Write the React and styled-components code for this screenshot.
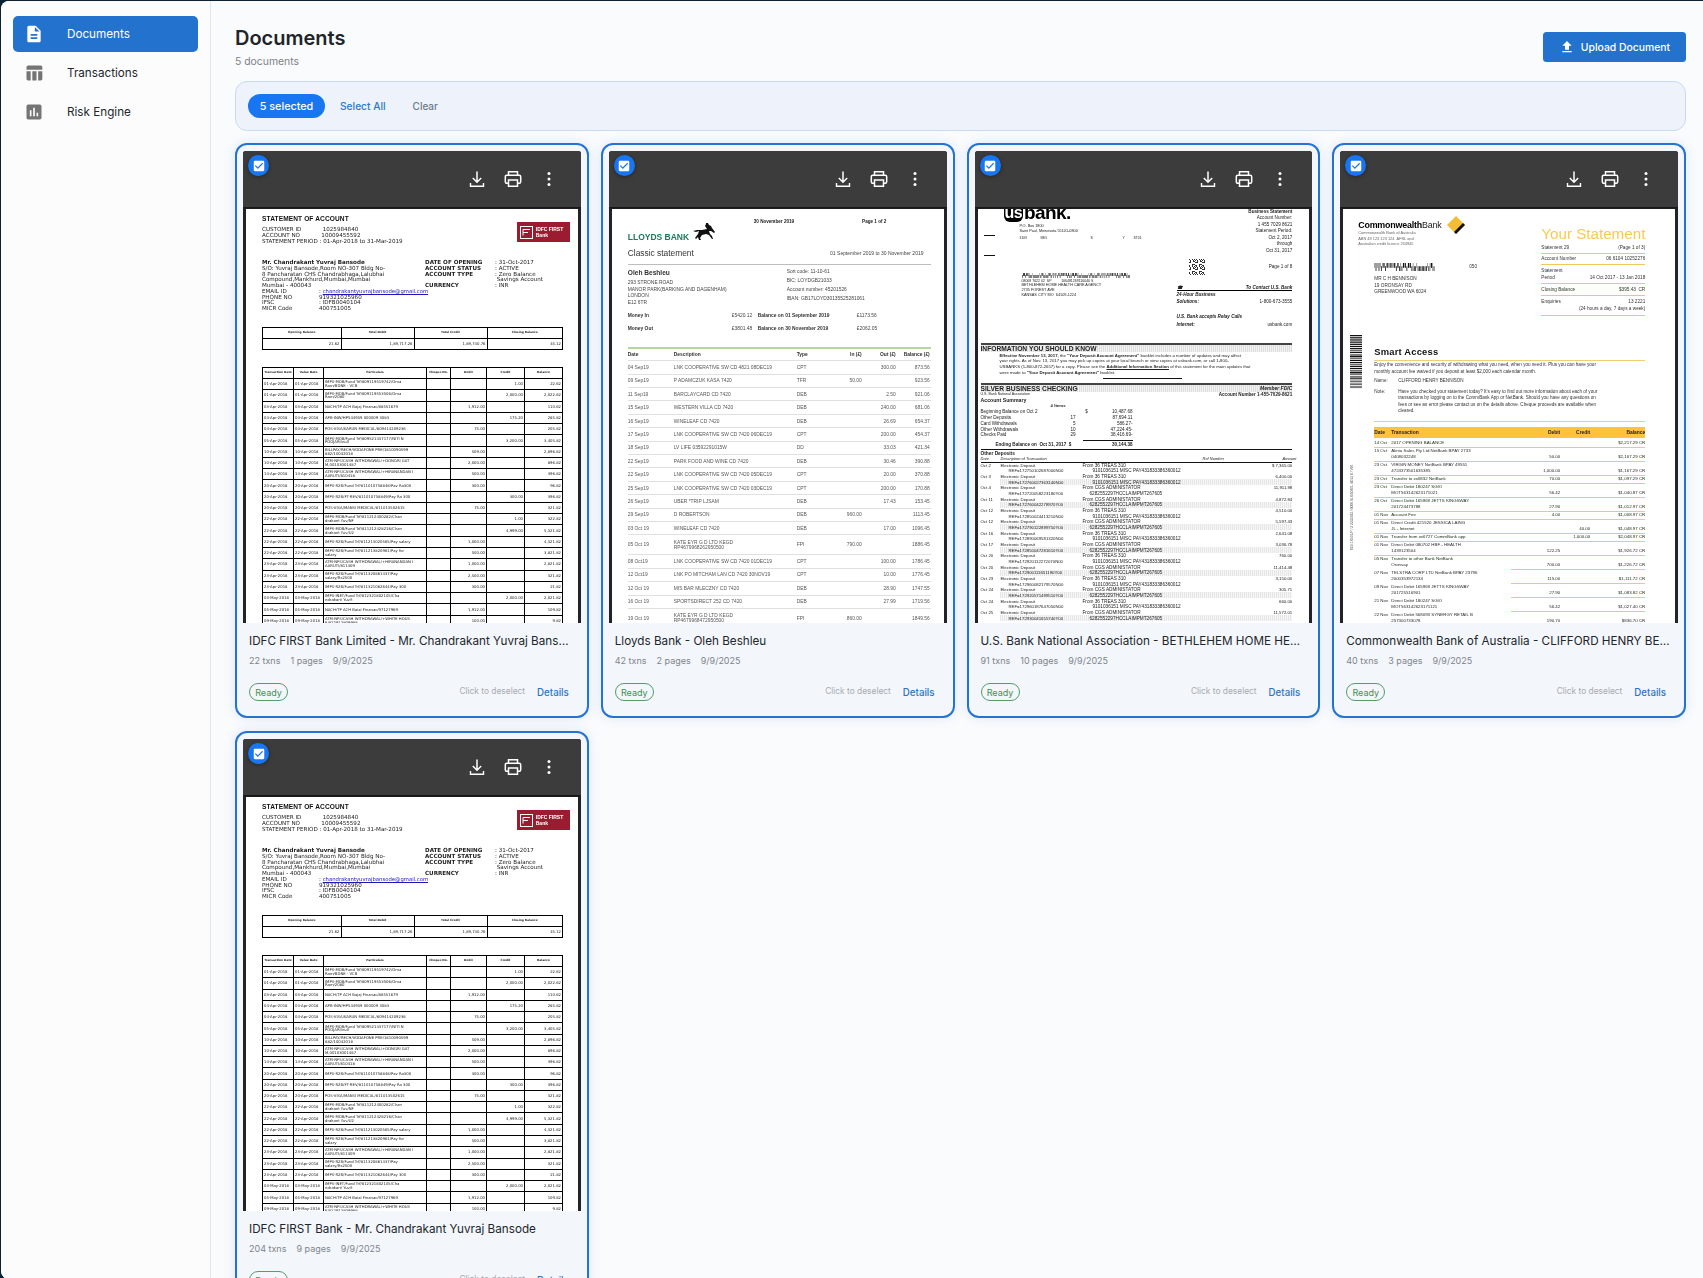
import React from "react";
import styled, { createGlobalStyle } from "styled-components";

const GlobalStyle = createGlobalStyle`
  html, body { margin: 0; padding: 0; height: 100%; background: #0c2233; }
  #root { height: 100%; }
  * { box-sizing: border-box; }
`;

const Shell = styled.div`
  display: flex;
  height: 100vh;
  overflow: hidden;
  margin-top: 1px;
  margin-left: 1px;
  border-radius: 8px 0 0 8px;
  font-family: Inter, "Liberation Sans", sans-serif;
  background: #fafbfd;
`;

const Sidebar = styled.nav`
  width: 210px;
  flex: none;
  padding: 15px 12px 0 12px;
  background: #fcfcfd;
  border-right: 1px solid #e2e5e9;
  display: flex;
  flex-direction: column;
  gap: 3px;
`;

const NavItem = styled.div`
  height: 36px;
  border-radius: 5px;
  display: flex;
  align-items: center;
  padding-left: 11px;
  gap: 23px;
  font-size: 11.7px;
  color: ${(p) => (p.$active ? "#ffffff" : "#23272c")};
  background: ${(p) => (p.$active ? "#2373ce" : "transparent")};
  svg { width: 20px; height: 20px; fill: ${(p) => (p.$active ? "#ffffff" : "#757575")}; }
`;

const NavLabel = styled.span`
  margin-top: -1px;
`;

const Main = styled.main`
  flex: 1;
  min-width: 0;
  padding: 23px 17px 0 24px;
`;

const Header = styled.header`
  display: flex;
  justify-content: space-between;
  align-items: flex-start;
  margin-bottom: 10px;
`;

const PageTitle = styled.h1`
  margin: 0;
  font-size: 20px;
  line-height: 28px;
  font-weight: 600;
  color: #212529;
`;

const PageCount = styled.div`
  margin-top: 1px;
  font-size: 10.4px;
  line-height: 18px;
  color: #7c8188;
`;

const UploadButton = styled.button`
  margin-top: 8px;
  width: 143px;
  height: 30px;
  border: 0;
  border-radius: 3.5px;
  background: #2373ce;
  color: #ffffff;
  font: 500 10.4px Inter, sans-serif;
  display: flex;
  align-items: center;
  justify-content: center;
  gap: 6px;
  svg { width: 16px; height: 16px; fill: #ffffff; }
`;

const SelectionBar = styled.div`
  height: 50px;
  margin-bottom: 12px;
  padding-left: 12px;
  display: flex;
  align-items: center;
  gap: 15px;
  background: #edf2fb;
  border: 1px solid #c8daf2;
  border-radius: 12px;
`;

const SelectedChip = styled.span`
  width: 77px;
  height: 24px;
  border-radius: 12px;
  background: #1976f2;
  color: #ffffff;
  font-size: 10.8px;
  font-weight: 500;
  display: flex;
  align-items: center;
  justify-content: center;
`;

const BarLink = styled.span`
  font-size: ${(p) => (p.$muted ? 10 : 10.2)}px;
  font-weight: 500;
  margin-right: 12px;
  color: ${(p) => (p.$muted ? "#6d7a88" : "#2a78d6")};
`;

const CardGrid = styled.div`
  display: grid;
  grid-template-columns: repeat(4, minmax(0, 1fr));
  column-gap: 12px;
  row-gap: 13px;
`;

const Card = styled.article`
  position: relative;
  min-width: 0;
  padding: 6px 6px 0;
  height: 575px;
  border: 2px solid #2472d2;
  border-radius: 12px;
  background: #f3f6fb;
  box-shadow: 0 0 12px rgba(36, 114, 210, 0.14);
`;

const CheckBadge = styled.div`
  position: absolute;
  top: 10px;
  left: 11px;
  width: 21px;
  height: 21px;
  border-radius: 50%;
  background: #1976f2;
  box-shadow: 0 1px 4px rgba(0, 0, 0, 0.35);
  display: flex;
  align-items: center;
  justify-content: center;
  svg { width: 14px; height: 14px; fill: #ffffff; }
`;

const Viewer = styled.div`
  height: 472px;
  display: flex;
  flex-direction: column;
  border-radius: 3px 3px 0 0;
  overflow: hidden;
  background: #222326;
`;

const ViewerBar = styled.div`
  flex: none;
  height: 56px;
  background: #3c3c3c;
  display: flex;
  align-items: center;
  justify-content: flex-end;
  padding-right: 14px;
  box-shadow: 0 1px 2px rgba(0, 0, 0, 0.5);
`;

const ViewerButton = styled.span`
  width: 36px;
  display: flex;
  justify-content: center;
  svg { width: 20px; height: 20px; fill: none; stroke: #ffffff; stroke-width: 1.5; }
`;

const PageWell = styled.div`
  flex: 1;
  min-height: 0;
  padding: 2px 3px 0;
  overflow: hidden;
`;

const CardBody = styled.div`
  padding: 9px 11px 0 6px;
`;

const CardTitle = styled.div`
  margin-right: -3px;
  font-size: 11.7px;
  line-height: 18px;
  color: #22262b;
  white-space: nowrap;
  overflow: hidden;
  text-overflow: ellipsis;
`;

const MetaRow = styled.div`
  margin-top: 3px;
  display: flex;
  gap: 10px;
  font-size: 9px;
  line-height: 16px;
  color: #80858c;
`;

const CardFooter = styled.div`
  margin: 14px 1px 0 0;
  display: flex;
  align-items: center;
  gap: 12px;
`;

const ReadyChip = styled.span`
  width: 39px;
  height: 18px;
  border: 1px solid #559d69;
  border-radius: 9px;
  color: #43914f;
  font-size: 9px;
  display: flex;
  align-items: center;
  justify-content: center;
  margin-right: auto;
`;

const DeselectHint = styled.span`
  font-size: 8.4px;
  color: #a7abb0;
  margin-top: -2px;
`;

const DetailsLink = styled.span`
  font-size: 9.7px;
  font-weight: 500;
  color: #2c74c6;
  margin-top: 1px;
`;

/* statement pages */

const Sheet = styled.div`
  height: 500px;
  background: #ffffff;
  color: #222;
  font-family: "Liberation Sans", Arial, sans-serif;
  overflow: hidden;
  filter: blur(0.28px);
  white-space: nowrap;
`;

const IdfcSheet = styled(Sheet)`
  padding: 5px 0 0 16px;
  font-family: "DejaVu Sans", sans-serif;
`;

const IdfcTop = styled.div`
  display: flex;
  justify-content: space-between;
  padding-right: 8px;
`;

const IdfcHeading = styled.div`
  font: bold 6.6px/9px "Liberation Sans", sans-serif;
  color: #111;
  letter-spacing: 0.1px;
`;

const IdfcLines = styled.div`
  margin-top: ${(p) => p.$top || 0}px;
  font-size: 5.6px;
  line-height: ${(p) => p.$lh || 6}px;
  ${(p) => p.$bold && "font-weight: bold;"}
`;

const IdfcLogo = styled.div`
  margin-top: 8px;
  width: 53px;
  height: 20px;
  background: #9b1b30;
  color: #ffffff;
  display: flex;
  align-items: center;
  gap: 3px;
  padding-left: 3px;
  font: bold 5px/6px "Liberation Sans", sans-serif;
  svg { width: 13px; height: 13px; }
`;

const IdfcCustomer = styled.div`
  margin-top: 16px;
  display: flex;
`;

const IdfcLeft = styled.div`
  width: 163px;
`;

const IdfcMiddle = styled.div`
  width: 70px;
`;

const EmailRow = styled.div`
  display: flex;
  span:first-child { width: 57px; flex: none; }
`;

const MailLink = styled.span`
  color: #1a1ab8;
  text-decoration: underline;
  font-size: 5.3px;
`;

const IdfcTable = styled.table`
  width: 301px;
  margin-top: ${(p) => p.$top}px;
  border-collapse: collapse;
  table-layout: fixed;
  font-size: 3.8px;
  line-height: 3.9px;
  td, th {
    border: 1px solid #000;
    padding: 0 1px;
    overflow: hidden;
    white-space: normal;
    color: #222;
    height: ${(p) => p.$row}px;
  }
  th { text-align: center; font-weight: bold; white-space: nowrap; font-size: 2.9px; padding: 0; }
  td.num { text-align: right; }
`;

const CellClip = styled.div`
  max-height: 8px;
  overflow: hidden;
  padding-right: 10px;
`;

const LloydsSheet = styled(Sheet)`
  padding: 6px 13px 0 16px;
  color: #444;
  font-size: 4.9px;
`;

const LloydsTop = styled.div`
  display: flex;
  height: 12px;
  align-items: center;
  font-weight: bold;
  font-size: 4.6px;
  color: #222;
  span:first-child { margin-left: 126px; }
  span:last-child { margin-left: 68px; }
`;

const LloydsBrand = styled.div`
  margin-top: -3px;
  height: 19px;
  display: flex;
  align-items: flex-end;
  gap: 3px;
  color: #1c7a5b;
  font-size: 8.5px;
  font-weight: bold;
  line-height: 12px;
  svg { width: 24px; height: 20px; }
`;

const ClassicRow = styled.div`
  margin-top: 4px;
  height: 12px;
  display: flex;
  justify-content: space-between;
  align-items: center;
  padding-right: 7px;
  font-size: 5px;
  b { font-weight: normal; font-size: 8.4px; color: #333; }
`;

const LloydsRule = styled.div`
  margin-top: ${(p) => p.$top}px;
  height: ${(p) => p.$h || 1}px;
  background: ${(p) => p.$color || "#bdbdbd"};
`;

const AddressGrid = styled.div`
  display: grid;
  grid-template-columns: 159px 1fr;
  margin-top: 2px;
`;

const HolderName = styled.div`
  font-size: 6.6px;
  font-weight: bold;
  line-height: 9px;
  margin: 1px 0 3px;
  color: #333;
`;

const AddressLine = styled.div`
  line-height: ${(p) => p.$lh}px;
`;

const MoneyRow = styled.div`
  display: grid;
  grid-template-columns: 104px 26px 99px 1fr;
  height: 12.5px;
  align-items: center;
  ${(p) => p.$first && "margin-top: 2.5px;"}
  b { color: #333; }
`;

const LloydsTxRow = styled.div`
  display: grid;
  grid-template-columns: 46px 123px 33px 32px 34px 34px;
  height: ${(p) => p.$h}px;
  align-items: center;
  border-bottom: 1px solid #e0e0e0;
  color: ${(p) => (p.$head ? "#333" : "#555")};
  font-weight: ${(p) => (p.$head ? "bold" : "normal")};
  span.num { text-align: right; }
`;

const UsbSheet = styled(Sheet)`
  padding: 0 17px 0 3px;
  font-size: 4.6px;
  color: #222;
`;

const UsbTop = styled.div`
  margin-top: -6px;
  display: flex;
  height: 124px;
  margin-bottom: 16px;
`;

const UsbLeft = styled.div`
  width: 189px;
  flex: none;
`;

const UsbRight = styled.div`
  flex: 1;
  text-align: right;
  padding-top: 5.7px;
`;

const UsbLogo = styled.div`
  margin-left: 23px;
  height: 19px;
  display: flex;
  align-items: center;
  font-weight: bold;
  font-size: 19px;
  line-height: 19px;
  color: #000;
  letter-spacing: -0.6px;
`;

const UsbMark = styled.span`
  background: #000;
  color: #fff;
  border-radius: 0 0 6px 6px;
  font-size: 16px;
  padding: 0 1px;
  margin-right: 1px;
`;

const UsbSmall = styled.div`
  margin-left: ${(p) => p.$left}px;
  margin-top: ${(p) => p.$top || 0}px;
  font-size: ${(p) => p.$size || 3.8}px;
  line-height: ${(p) => p.$lh || 4.6}px;
`;

const UsbBarcode = styled.div`
  margin: 17px 0 0 41px;
  width: 108px;
  height: 5px;
  svg { display: block; width: 108px; height: 5px; }
`;

const UsbDash = styled.div`
  width: 11px;
  height: 1px;
  background: #111;
  margin: ${(p) => p.$top}px 0 0 3px;
`;

const UsbMailRow = styled.div`
  margin-left: 39px;
  display: grid;
  grid-template-columns: 21px 50px 32px 11px auto;
  font-size: 3.4px;
  line-height: 4.6px;
`;

const UsbRightLine = styled.div`
  line-height: 6.55px;
`;

const UsbQrRow = styled.div`
  margin-top: 2px;
  height: 18px;
  display: flex;
  justify-content: space-between;
  padding: 2px 0 0 19px;
  line-height: 16px;
  svg { width: 16px; height: 16px; }
`;

const UsbContact = styled.div`
  margin: 10px 0 0 7px;
  height: 6px;
  display: flex;
  justify-content: space-between;
  align-items: center;
  border-bottom: 1px solid #000;
  font-weight: bold;
  font-style: italic;
`;

const UsbBlock = styled.div`
  margin: ${(p) => p.$top || 0}px 0 0 7px;
  display: flex;
  justify-content: space-between;
  line-height: 7px;
  b { font-style: italic; }
`;

const SectionBand = styled.div`
  height: 9px;
  border-top: 2px solid #444;
  margin-top: ${(p) => p.$top || 0}px;
  display: flex;
  justify-content: space-between;
  align-items: center;
  background: repeating-linear-gradient(90deg, #dedede 0 1px, #f2f2f2 1px 2px);
  font-weight: bold;
  font-size: 6.7px;
  line-height: 7px;
  color: #222;
  em { font-size: 5px; }
`;

const UsbNotice = styled.div`
  margin: 0.5px 0 0 19px;
  font-size: 4.3px;
  line-height: 5.7px;
  u { font-weight: bold; }
`;

const UsbShortRule = styled.div`
  width: 79px;
  height: 1px;
  background: #111;
  margin: 3px 0 0 122px;
`;

const UsbSummaryHead = styled.div`
  display: flex;
  justify-content: space-between;
  line-height: 5px;
  font-size: 3.6px;
  b { font-size: 4.6px; }
`;

const UsbBoldLine = styled.div`
  font-weight: bold;
  font-size: ${(p) => p.$size || 5.2}px;
  line-height: ${(p) => p.$lh || 6}px;
  margin-top: ${(p) => p.$top || 0}px;
  ${(p) => p.$left && `margin-left: ${p.$left}px;`}
`;

const UsbSummaryRow = styled.div`
  display: grid;
  grid-template-columns: 81px 14px 57px;
  line-height: 5.75px;
  span:nth-child(2), span:nth-child(3) { text-align: right; }
`;

const UsbEnding = styled.div`
  display: grid;
  grid-template-columns: 15px 81px 56px;
  margin-top: 4px;
  font-weight: bold;
  line-height: 6px;
  span:nth-child(2) { white-space: nowrap; }
  span:nth-child(3) { text-align: right; border-top: 1px solid #111; margin-top: -2px; padding-top: 1px; margin-left: 6px; }
`;

const UsbHeavyRule = styled.div`
  height: 1px;
  background: #111;
  margin-top: ${(p) => p.$top}px;
`;

const UsbColumns = styled.div`
  display: grid;
  grid-template-columns: 20px 202px 80px 1fr;
  font-style: italic;
  font-size: 4px;
  line-height: 4.5px;
`;

const UsbTxRow = styled.div`
  height: 11.35px;
  font-size: 4.3px;
  line-height: 5.67px;
  background: ${(p) =>
    p.$shade
      ? "repeating-linear-gradient(90deg, #e6e6e6 0 1px, #f6f6f6 1px 2px) 19px 5px / 100% 6px no-repeat"
      : "none"};
`;

const UsbTxLine = styled.div`
  display: grid;
  height: 5.67px;
  grid-template-columns: ${(p) => p.$cols};
  span.num { text-align: right; }
  span.wide { font-size: 4.7px; }
`;

const CbaSheet = styled(Sheet)`
  font-size: 4.7px;
  color: #333;
`;

const CbaTop = styled.div`
  display: flex;
  height: 107px;
  padding-left: 15px;
`;

const CbaLeft = styled.div`
  width: 183px;
  padding-top: 7px;
`;

const CbaBrand = styled.div`
  height: 18px;
  display: flex;
  align-items: center;
  gap: 6px;
  font-size: 8.9px;
  color: #222;
  letter-spacing: -0.2px;
  svg { width: 18px; height: 18px; }
  b { color: #000; }
`;

const CbaFine = styled.div`
  margin-top: -4px;
  font-size: 3.9px;
  line-height: 5.6px;
  color: #666;
`;

const CbaBarRow = styled.div`
  margin: 16.5px 0 0 16px;
  height: 8px;
  display: flex;
  gap: 34px;
  line-height: 8px;
  svg { width: 61px; height: 8px; }
`;

const CbaAddress = styled.div`
  margin: 5px 0 0 16px;
  line-height: 6.6px;
`;

const CbaPanel = styled.div`
  width: 104px;
  padding-top: 15.5px;
`;

const YourStatement = styled.div`
  font-size: 15.2px;
  line-height: 18px;
  color: #fcc94e;
`;

const PanelRow = styled.div`
  height: ${(p) => p.$h}px;
  border-bottom: 1px solid #f0c95c;
  display: flex;
  flex-direction: column;
  justify-content: center;
  div { display: flex; justify-content: space-between; line-height: 7px; }
`;

const CbaLower = styled.div`
  display: flex;
  padding-left: 7px;
`;

const CbaSide = styled.div`
  width: 24px;
  flex: none;
  padding-top: 19px;
  svg { display: block; width: 12px; height: 54px; }
`;

const CbaVertical = styled.div`
  margin: 41px 0 0 0;
  writing-mode: vertical-rl;
  transform: rotate(180deg);
  font-size: 3.3px;
  line-height: 4px;
  height: 120px;
  width: 4px;
  color: #555;
`;

const CbaMain = styled.div`
  width: 271px;
`;

const SmartTitle = styled.div`
  margin-top: 29.7px;
  font-size: 9.4px;
  font-weight: bold;
  line-height: 12px;
  color: #111;
  letter-spacing: 0.2px;
`;

const YellowRule = styled.div`
  height: 1px;
  margin-top: ${(p) => p.$top}px;
  background: #f0cf70;
`;

const CbaPara = styled.div`
  margin-top: ${(p) => p.$top || 0}px;
  line-height: 6.55px;
  font-size: 4.6px;
`;

const NoteRow = styled.div`
  display: grid;
  grid-template-columns: 24px 1fr;
  line-height: 6.55px;
  font-size: 4.6px;
  margin-top: ${(p) => p.$top}px;
`;

const CbaHead = styled.div`
  margin-top: 4.5px;
  height: 11px;
  display: grid;
  grid-template-columns: 17px 139px 30px 30px 55px;
  align-items: center;
  background: #fdc33f;
  font-weight: bold;
  font-size: 4.9px;
  color: #222;
  span.num { text-align: right; }
`;

const CbaTxRow = styled.div`
  display: grid;
  grid-template-columns: 17px 139px 30px 30px 55px;
  height: ${(p) => p.$h}px;
  line-height: 6.4px;
  align-items: end;
  font-size: 4.4px;
  color: #2a2a2a;
  padding-bottom: 1px;
  background: linear-gradient(#eecb66, #eecb66) right bottom / ${(p) => (p.$partial ? "134px" : "100%")} 1px no-repeat;
  span:first-child { align-self: ${(p) => (p.$single ? "end" : "start")}; }
  span.num { text-align: right; }
`;

/* data */

const idfcRows = [
  ["01-Apr-2018", "IMPS-MOB/Fund Trf/809119519742/Oma Ram/BDNE - VCB", "", "1.00", "22.62"],
  ["01-Apr-2018", "IMPS-MOB/Fund Trf/809119553506/Oma Ram/2080", "", "2,000.00", "2,022.62"],
  ["03-Apr-2018", "NACH/TP ACH Bajaj Finanac/88551679", "1,912.00", "", "110.62"],
  ["04-Apr-2018", "APB-INW/HP544959 000009 3083", "", "175.20", "285.82"],
  ["04-Apr-2018", "POS-VISA/KARUN MEDICAL/809414209236", "75.00", "", "205.82"],
  ["05-Apr-2018", "IMPS-MOB/Fund Trf/809521437177/NITI N POOJARI/null", "", "3,200.00", "3,405.82"],
  ["10-Apr-2018", "BILLPAY/RECH/VODAFONE PRE/1810090S99 882/10042018", "509.00", "", "2,896.82"],
  ["10-Apr-2018", "ATM-NFS/CASH WITHDRAWAL/+DONGRI GAT M,00103001487", "2,000.00", "", "896.82"],
  ["14-Apr-2018", "ATM-NFS/CASH  WITHDRAWAL/+HIRANANDAN I AARUTI/810418", "500.00", "", "396.82"],
  ["20-Apr-2018", "IMPS-R2B/Fund Trf/811010758848/Pay Ra300", "300.00", "", "96.82"],
  ["20-Apr-2018", "IMPS-R2B/FT-REV/811010758849/Pay Ra 300", "", "300.00", "396.82"],
  ["20-Apr-2018", "POS-VISA/MANSI MEDICAL/811013502615", "75.00", "", "321.82"],
  ["22-Apr-2018", "IMPS-MOB/Fund Trf/811212400282/Chan drakant Yuv/NF", "", "1.00", "322.82"],
  ["22-Apr-2018", "IMPS-MOB/Fund Trf/811212428216/Chan drakant Yuv/U2", "", "4,999.00", "5,321.82"],
  ["22-Apr-2018", "IMPS-R2B/Fund Trf/811213020565/Pay salary", "1,000.00", "", "4,321.82"],
  ["22-Apr-2018", "IMPS-R2B/Fund Trf/811213820961/Pay for salary", "500.00", "", "3,821.82"],
  ["23-Apr-2018", "ATM-NFS/CASH  WITHDRAWAL/+HIRANANDAN I AARUTI/811309", "1,000.00", "", "2,821.82"],
  ["23-Apr-2018", "IMPS-R2B/Fund Trf/811320861437/Pay salary/Rs2500", "2,500.00", "", "321.82"],
  ["23-Apr-2018", "IMPS-R2B/Fund Trf/811321062644/Pay 300", "300.00", "", "21.82"],
  ["03-May-2018", "IMPS-INET/Fund Trf/812321802105/Cha ndrakant Yuv/t", "", "2,000.00", "2,021.82"],
  ["05-May-2018", "NACH/TP ACH Bajaj Finanac/97127969", "1,912.00", "", "109.82"],
  ["09-May-2018", "ATM-NFS/CASH WITHDRAWAL/+WHITE HOUS E/812912809988", "100.00", "", "9.82"],
  ["11-May-2018", "IMPS-R2B/Fund Trf/813110203040/Pay", "", "", "9.82"],
];

const lloydsRows = [
  ["04 Sep19", "LNK COOPERATIVE SW CD 4821 08DEC19", "CPT", "", "300.00", "873.56"],
  ["09 Sep19", "P ADAMCZUK KASA 7420", "TFR", "50.00", "", "923.56"],
  ["11 Sep19", "BARCLAYCARD CD 7420", "DEB", "", "2.50", "921.06"],
  ["15 Sep19", "WESTERN VILLA CD 7420", "DEB", "", "240.00", "681.06"],
  ["16 Sep19", "WINELEAF CD 7420", "DEB", "", "26.69", "654.37"],
  ["17 Sep19", "LNK COOPERATIVE SW CD 7420 06DEC19", "CPT", "", "200.00", "454.37"],
  ["18 Sep19", "LV LIFE 03592291015W", "DD", "", "33.03", "421.34"],
  ["22 Sep19", "PARK FOOD AND WINE CD 7420", "DEB", "", "30.46", "390.88"],
  ["22 Sep19", "LNK COOPERATIVE SW CD 7420 05DEC19", "CPT", "", "20.00", "370.88"],
  ["25 Sep19", "LNK COOPERATIVE SW CD 7420 03DEC19", "CPT", "", "200.00", "170.88"],
  ["26 Sep19", "UBER *TRIP LJSAM", "DEB", "", "17.43", "153.45"],
  ["29 Sep19", "D ROBERTSON", "DEB", "960.00", "", "1113.45"],
  ["03 Oct 19", "WINELEAF CD 7420", "DEB", "", "17.00", "1096.45"],
  ["05 Oct 19", "KATE EYR G D LTD KEGD", "FPI", "790.00", "", "1886.45", "RP4679968262950500"],
  ["08 Oct19", "LNK COOPERATIVE SW CD 7420 01DEC19", "CPT", "", "100.00", "1786.45"],
  ["12 Oct19", "LNK PO MITCHAM LAN CD 7420 30NOV19", "CPT", "", "10.00", "1776.45"],
  ["12 Oct 19", "MIS BAR MLECZNY CD 7420", "DEB", "", "28.90", "1747.55"],
  ["16 Oct 19", "SPORTSDIRECT 252 CD 7420", "DEB", "", "27.99", "1719.56"],
  ["19 Oct 19", "KATE EYR G D LTD KEGD", "FPI", "860.00", "", "1849.56", "RP4679968472950500"],
];

const treas = ["From 36  TREAS 310", "9101036151 MISC PAY431833386360012"];
const cgs = ["From CGS ADMINISTATOR", "6282552297HCCLAIMPMT267605"];

const usbRows = [
  ["Oct  2", "REF=172750102687000N00", treas, "7,365.00", "$"],
  ["Oct  3", "REF=172760027363140N00", treas, "6,400.00"],
  ["Oct  4", "REF=172720058223180Y00", cgs, "11,911.98"],
  ["Oct 11", "REF=172760042278970Y00", cgs, "4,872.84"],
  ["Oct 12", "REF=172850024413210N00", treas, "4,510.00"],
  ["Oct 12", "REF=172790122899750Y00", cgs, "5,597.43"],
  ["Oct 16", "REF=172890069581320N00", treas, "2,641.08"],
  ["Oct 17", "REF=172850047281610Y00", cgs, "3,036.78"],
  ["Oct 20", "REF=172920112272070N00", treas, "760.00"],
  ["Oct 20", "REF=172900111651190Y00", cgs, "11,414.48"],
  ["Oct 23", "REF=172960082179570N00", treas, "3,150.00"],
  ["Oct 24", "REF=172920571499510Y00", cgs, "305.71"],
  ["Oct 24", "REF=172960187647050N00", treas, "660.00"],
  ["Oct 25", "REF=172930041655740Y00", cgs, "11,572.01"],
];

const cbaRows = [
  ["14 Oct", "2017 OPENING BALANCE", "", "", "", "$2,217.29 CR", 10],
  ["15 Oct", "Alinta Sales Pty Ltd NetBank BPAY 2733", "0408032248", "50.00", "", "$2,167.29 CR", 14],
  ["23 Oct", "VIRGIN MONEY NetBank BPAY 49551", "4724373501635385", "1,000.00", "", "$1,167.29 CR", 14],
  ["23 Oct", "Transfer to xx6832 NetBank", "", "70.00", "", "$1,097.29 CR", 8],
  ["23 Oct", "Direct Debit 180247 SGIO", "MOT563142623171021", "56.42", "", "$1,040.87 CR", 14],
  ["26 Oct", "Direct Debit 165969 JETTS KINGSWAY", "201724473788", "27.90", "", "$1,012.97 CR", 14],
  ["01 Nov", "Account Fee", "", "4.00", "", "$1,008.97 CR", 8],
  ["01 Nov", "Direct Credit 421520 JESSICA LAING", "JL - Internet", "", "40.00", "$1,048.97 CR", 14],
  ["01 Nov", "Transfer from xx6727 CommBank app", "", "", "1,000.00", "$2,048.97 CR", 8],
  ["01 Nov", "Direct Debit 080702 HBF - HEALTH", "1439123504", "122.25", "", "$1,926.72 CR", 14],
  ["05 Nov", "Transfer to other Bank NetBank", "Oronsay", "700.00", "", "$1,226.72 CR", 14, true],
  ["07 Nov", "TELSTRA CORP LTD NetBank BPAY 23796", "2000353972134", "115.00", "", "$1,111.72 CR", 14, true],
  ["09 Nov", "Direct Debit 165969 JETTS KINGSWAY", "201725516901", "27.90", "", "$1,083.82 CR", 14, true],
  ["21 Nov", "Direct Debit 180247 SGIO", "MOT563142623171121", "56.42", "", "$1,027.40 CR", 14, true],
  ["22 Nov", "Direct Debit 568093 SYNERGY RETAIL B", "257300733078", "190.70", "", "$836.70 CR", 14],
];

/* drawings */

function Bars({ count, seed, vertical, color = "#111" }) {
  const rects = [];
  let x = 0;
  for (let i = 0; i < count; i++) {
    const n = (i * 7 + seed * 13 + (i * i) % 11) % 5;
    const w = 0.6 + (n % 3) * 0.6;
    if (vertical) rects.push(<rect key={i} x="0" y={x} width="100" height={w} fill={color} />);
    else {
      const h = n % 2 ? 100 : 60;
      rects.push(<rect key={i} x={x} y={n % 3 === 1 ? 40 : 0} width={w} height={h} fill={color} />);
    }
    x += w + 0.9;
  }
  return (
    <svg viewBox={vertical ? `0 0 100 ${x}` : `0 0 ${x} 100`} preserveAspectRatio="none">
      {rects}
    </svg>
  );
}

function QrCode() {
  const cells = [];
  for (let r = 0; r < 16; r++) {
    for (let c = 0; c < 16; c++) {
      if ((r * 5 + c * 3 + r * c) % 7 < 3) cells.push(<rect key={`${r}-${c}`} x={c} y={r} width="1" height="1" fill="#333" />);
    }
  }
  return <svg viewBox="0 0 16 16">{cells}</svg>;
}

const CheckIcon = () => (
  <svg viewBox="0 0 24 24">
    <path d="M19 3H5c-1.11 0-2 .9-2 2v14c0 1.1.89 2 2 2h14c1.11 0 2-.9 2-2V5c0-1.1-.89-2-2-2zm-9 14l-5-5 1.41-1.41L10 14.17l7.59-7.59L19 8l-9 9z" />
  </svg>
);

const DownloadIcon = () => (
  <svg viewBox="0 0 20 20">
    <path d="M10 2.5v10.5M5.8 9l4.2 4.2L14.200 9" />
    <path d="M3.500 14v3.200h13V14" strokeWidth="1.4" />
  </svg>
);

const PrintIcon = () => (
  <svg viewBox="0 0 20 20">
    <path d="M5.500 6V2.800h9V6" />
    <path d="M5.500 14.300H3.800a1.500 1.500 0 0 1-1.500-1.500V7.700a1.500 1.500 0 0 1 1.500-1.500h12.400a1.500 1.500 0 0 1 1.500 1.500v5.100a1.500 1.500 0 0 1-1.500 1.500h-1.700" />
    <path d="M5.500 11h9v6.200h-9z" />
  </svg>
);

const MoreIcon = () => (
  <svg viewBox="0 0 20 20">
    <circle cx="10" cy="4.500" r="1.500" fill="#fff" stroke="none" />
    <circle cx="10" cy="10" r="1.500" fill="#fff" stroke="none" />
    <circle cx="10" cy="15.500" r="1.500" fill="#fff" stroke="none" />
  </svg>
);

const HorseIcon = () => (
  <svg viewBox="0 0 24 20">
    <path
      d="M16 0l1 2 2 1 1 2 3 4-1 1-3-2-2 0 1 3 2 2 1 3-1 0-3-4-3-1-4 1-2 3 1 2-2 0-1-3-2 2-1-1 3-4 1-3-3 1-3-1 4-1 5 0 5-1-2-3 1-2 0-3z"
      fill="#111"
    />
  </svg>
);

const DiamondIcon = () => (
  <svg viewBox="0 0 18 18">
    <path d="M9 0l9 9-9 9-9-9z" fill="#f3bd35" />
    <path d="M18 9l-9 9-2-2 9-9z" fill="#111" />
  </svg>
);

const IdfcMark = () => (
  <svg viewBox="0 0 13 13" fill="none" stroke="#fff" strokeWidth="1">
    <rect x="0.500" y="0.500" width="12" height="12" />
    <path d="M3 3.500h7M3 6.500h5M3 3.500v6" />
  </svg>
);

/* pages */

function IdfcPage() {
  return (
    <IdfcSheet>
      <IdfcTop>
        <div>
          <IdfcHeading>STATEMENT OF ACCOUNT</IdfcHeading>
          <IdfcLines $top={3}>
            <div>CUSTOMER ID &nbsp; &nbsp; &nbsp; &nbsp; &nbsp; &nbsp;1025984840</div>
            <div>ACCOUNT NO &nbsp; &nbsp; &nbsp; &nbsp; &nbsp; &nbsp;10009455592</div>
            <div>STATEMENT PERIOD : 01-Apr-2018 to 31-Mar-2019</div>
          </IdfcLines>
        </div>
        <IdfcLogo>
          <IdfcMark />
          <div>IDFC FIRST<br />Bank</div>
        </IdfcLogo>
      </IdfcTop>
      <IdfcCustomer>
        <IdfcLeft>
          <IdfcLines $lh={5.75}>
            <div><b>Mr. Chandrakant Yuvraj Bansode</b></div>
            <div>S/O: Yuvraj Bansode,Room NO-307 Bldg No-</div>
            <div>8 Pancharatan CHS Chandrabhaga,Lalubhai</div>
            <div>Compound,Mankhurd,Mumbai,Mumbai</div>
            <div>Mumbai - 400043</div>
            <EmailRow><span>EMAIL ID</span><span>: <MailLink>chandrakantyuvrajbansode@gmail.com</MailLink></span></EmailRow>
            <EmailRow><span>PHONE NO</span><span>919321025960</span></EmailRow>
            <EmailRow><span>IFSC</span><span>: IDFB0040104</span></EmailRow>
            <EmailRow><span>MICR Code</span><span>400751005</span></EmailRow>
          </IdfcLines>
        </IdfcLeft>
        <IdfcMiddle>
          <IdfcLines $lh={5.75} $bold>
            <div>DATE OF OPENING</div>
            <div>ACCOUNT STATUS</div>
            <div>ACCOUNT TYPE</div>
            <div>&nbsp;</div>
            <div>CURRENCY</div>
          </IdfcLines>
        </IdfcMiddle>
        <IdfcLines $lh={5.75}>
          <div>: 31-Oct-2017</div>
          <div>: ACTIVE</div>
          <div>: Zero Balance</div>
          <div>&nbsp;Savings Account</div>
          <div>: INR</div>
        </IdfcLines>
      </IdfcCustomer>
      <IdfcTable $top={15} $row={11}>
        <colgroup><col style={{ width: 78.5 }} /><col style={{ width: 73 }} /><col style={{ width: 73 }} /><col /></colgroup>
        <tbody>
          <tr><th>Opening Balance</th><th>Total Debit</th><th>Total Credit</th><th>Closing Balance</th></tr>
          <tr><td className="num">21.62</td><td className="num">1,89,717.26</td><td className="num">1,89,740.76</td><td className="num">45.12</td></tr>
        </tbody>
      </IdfcTable>
      <IdfcTable $top={17} $row={11.27}>
        <colgroup>
          <col style={{ width: 31 }} /><col style={{ width: 30 }} /><col style={{ width: 103 }} /><col style={{ width: 24 }} />
          <col style={{ width: 36 }} /><col style={{ width: 38 }} /><col />
        </colgroup>
        <tbody>
          <tr><th>Transaction Date</th><th>Value Date</th><th>Particulars</th><th>Cheque No.</th><th>Debit</th><th>Credit</th><th>Balance</th></tr>
          {idfcRows.map((r, i) => (
            <tr key={i}>
              <td>{r[0]}</td><td>{r[0]}</td><td><CellClip>{r[1]}</CellClip></td><td></td>
              <td className="num">{r[2]}</td><td className="num">{r[3]}</td><td className="num">{r[4]}</td>
            </tr>
          ))}
        </tbody>
      </IdfcTable>
    </IdfcSheet>
  );
}

function LloydsPage() {
  return (
    <LloydsSheet>
      <LloydsTop><span>30 November 2019</span><span>Page 1 of 2</span></LloydsTop>
      <LloydsBrand>LLOYDS BANK<HorseIcon /></LloydsBrand>
      <ClassicRow><b>Classic statement</b><span>01 September 2019 to 30 November 2019</span></ClassicRow>
      <LloydsRule $top={5} />
      <AddressGrid>
        <div>
          <HolderName>Oleh Beshleu</HolderName>
          <AddressLine $lh={6.7}>293 STRONE ROAD</AddressLine>
          <AddressLine $lh={6.7}>MANOR PARK(BARKING AND DAGENHAM)</AddressLine>
          <AddressLine $lh={6.7}>LONDON</AddressLine>
          <AddressLine $lh={6.7}>E12 6TR</AddressLine>
        </div>
        <div>
          <AddressLine $lh={9}>Sort code: 11-10-61</AddressLine>
          <AddressLine $lh={9}>BIC: LOYDGB21033</AddressLine>
          <AddressLine $lh={9}>Account number: 45201526</AddressLine>
          <AddressLine $lh={9}>IBAN: GB17LOYD30135525281061</AddressLine>
        </div>
      </AddressGrid>
      <MoneyRow $first><b>Money In</b><span>£5420.12</span><b>Balance on 01 September 2019</b><span>£1173.56</span></MoneyRow>
      <MoneyRow><b>Money Out</b><span>£3801.48</span><b>Balance on 30 November 2019</b><span>£2062.05</span></MoneyRow>
      <LloydsRule $top={12.5} $h={2} $color="#b5d79c" />
      <LloydsTxRow $h={12.5} $head>
        <span>Date</span><span>Description</span><span>Type</span><span className="num">In (£)</span><span className="num">Out (£)</span><span className="num">Balance (£)</span>
      </LloydsTxRow>
      {lloydsRows.map((r, i) => (
        <LloydsTxRow key={i} $h={r[6] ? 20 : 13.4}>
          <span>{r[0]}</span>
          <span>{r[1]}{r[6] && <><br />{r[6]}</>}</span>
          <span>{r[2]}</span>
          <span className="num">{r[3]}</span>
          <span className="num">{r[4]}</span>
          <span className="num">{r[5]}</span>
        </LloydsTxRow>
      ))}
    </LloydsSheet>
  );
}

function UsbPage() {
  return (
    <UsbSheet>
      <UsbTop>
        <UsbLeft>
          <UsbLogo><UsbMark>us</UsbMark>bank.</UsbLogo>
          <UsbSmall $left={39} $top={2}>P.O. Box 1800</UsbSmall>
          <UsbSmall $left={39}>Saint Paul, Minnesota 55101-0800</UsbSmall>
          <UsbDash $top={2} />
          <UsbMailRow><span>3109</span><span>IMG</span><span>S</span><span>Y</span><span>ST01</span></UsbMailRow>
          <UsbDash $top={14} />
          <UsbBarcode><Bars count={120} seed={3} /></UsbBarcode>
          <UsbSmall $left={41} $top={1} $size={3.5}>08008 7622 02 &nbsp;SP &nbsp; &nbsp; &nbsp; &nbsp; &nbsp;106481269116040 S</UsbSmall>
          <UsbSmall $left={41} $lh={5}>BETHLEHEM HOME HEALTH CARE AGENCY</UsbSmall>
          <UsbSmall $left={41} $lh={5}>2735 FOREST AVE</UsbSmall>
          <UsbSmall $left={41} $lh={5}>KANSAS CITY MO &nbsp;64109-1224</UsbSmall>
        </UsbLeft>
        <UsbRight>
          <UsbRightLine><b>Business Statement</b></UsbRightLine>
          <UsbRightLine>Account Number:</UsbRightLine>
          <UsbRightLine>1 455 7029 8621</UsbRightLine>
          <UsbRightLine>Statement Period:</UsbRightLine>
          <UsbRightLine>Oct 2, 2017</UsbRightLine>
          <UsbRightLine>through</UsbRightLine>
          <UsbRightLine>Oct 31, 2017</UsbRightLine>
          <UsbQrRow><QrCode /><span>Page 1 of 8</span></UsbQrRow>
          <UsbContact><span>☎</span><span>To Contact U.S. Bank</span></UsbContact>
          <UsbBlock><b>24-Hour Business</b></UsbBlock>
          <UsbBlock><b>Solutions:</b><span>1-800-673-3555</span></UsbBlock>
          <UsbBlock $top={8}><b>U.S. Bank accepts Relay Calls</b></UsbBlock>
          <UsbBlock $top={1}><b>Internet:</b><span>usbank.com</span></UsbBlock>
        </UsbRight>
      </UsbTop>
      <SectionBand>INFORMATION YOU SHOULD KNOW</SectionBand>
      <UsbNotice>
        <div><b>Effective November 13, 2017,</b> the <b>"Your Deposit Account Agreement"</b> booklet includes a number of updates and may affect</div>
        <div>your rights. As of Nov. 13, 2017 you may pick up copies at your local branch or view copies at usbank.com, or call 1-800-</div>
        <div>USBANKS (1-800-872-2657) for a copy. Please see the <u>Additional Information Section</u> of this statement for the main updates that</div>
        <div>were made to <b>"Your Deposit Account Agreement"</b> booklet.</div>
      </UsbNotice>
      <UsbShortRule />
      <SectionBand $top={4}>SILVER BUSINESS CHECKING<em>Member FDIC</em></SectionBand>
      <UsbSummaryHead><span>U.S. Bank National Association</span><b>Account Number 1-455-7029-8621</b></UsbSummaryHead>
      <UsbBoldLine>Account Summary</UsbBoldLine>
      <UsbBoldLine $size={4.4} $left={70}># Items</UsbBoldLine>
      <UsbSummaryRow><span>Beginning Balance on Oct 2</span><span></span><span>$ &nbsp; &nbsp; &nbsp; &nbsp; &nbsp; &nbsp; &nbsp; &nbsp; &nbsp; 10,487.68</span></UsbSummaryRow>
      <UsbSummaryRow><span>Other Deposits</span><span>17</span><span>87,694.11</span></UsbSummaryRow>
      <UsbSummaryRow><span>Card Withdrawals</span><span>5</span><span>586.27-</span></UsbSummaryRow>
      <UsbSummaryRow><span>Other Withdrawals</span><span>10</span><span>47,224.45-</span></UsbSummaryRow>
      <UsbSummaryRow><span>Checks Paid</span><span>29</span><span>38,416.69-</span></UsbSummaryRow>
      <UsbEnding><span></span><span>Ending Balance on &nbsp;Oct 31, 2017 &nbsp;$</span><span>30,144.38</span></UsbEnding>
      <UsbHeavyRule $top={1} />
      <UsbBoldLine $size={4.8} $lh={6} $top={1}>Other Deposits</UsbBoldLine>
      <UsbColumns><span>Date</span><span>Description of Transaction</span><span>Ref Number</span><span style={{ textAlign: "right" }}>Amount</span></UsbColumns>
      <UsbHeavyRule $top={0} />
      {usbRows.map((r, i) => (
        <UsbTxRow key={i} $shade={i % 2 === 1}>
          <UsbTxLine $cols="20px 82px 176px 1fr">
            <span>{r[0]}</span><span>Electronic Deposit</span><span className="wide">{r[2][0]}</span><span className="num">{r[4] && `$ `}{r[3]}</span>
          </UsbTxLine>
          <UsbTxLine $cols={r[2] === treas ? "28px 84px 1fr" : "28px 81px 1fr"}>
            <span></span><span>{r[1]}</span><span className="wide">{r[2][1]}</span>
          </UsbTxLine>
        </UsbTxRow>
      ))}
    </UsbSheet>
  );
}

function CbaPage() {
  return (
    <CbaSheet>
      <CbaTop>
        <CbaLeft>
          <CbaBrand><span><b>Commonwealth</b>Bank</span><DiamondIcon /></CbaBrand>
          <CbaFine>
            <div>Commonwealth Bank of Australia</div>
            <div>ABN 48 123 123 124 &nbsp;AFSL and</div>
            <div>Australian credit licence 234945</div>
          </CbaFine>
          <CbaBarRow><Bars count={46} seed={5} /><span>050</span></CbaBarRow>
          <CbaAddress>
            <div>MR C H BENNISON</div>
            <div>19 ORONSAY RD</div>
            <div>GREENWOOD WA 6024</div>
          </CbaAddress>
        </CbaLeft>
        <CbaPanel>
          <YourStatement>Your Statement</YourStatement>
          <PanelRow $h={11}><div><span>Statement 29</span><span>(Page 1 of 3)</span></div></PanelRow>
          <PanelRow $h={11.5}><div><span>Account Number</span><span>06 6104 10252276</span></div></PanelRow>
          <PanelRow $h={19}><div><span>Statement</span></div><div><span>Period</span><span>14 Oct 2017 - 13 Jan 2018</span></div></PanelRow>
          <PanelRow $h={11.5}><div><span>Closing Balance</span><span>$395.43 &nbsp;CR</span></div></PanelRow>
          <PanelRow $h={20}><div><span>Enquiries</span><span>13 2221</span></div><div><span></span><span>(24 hours a day, 7 days a week)</span></div></PanelRow>
        </CbaPanel>
      </CbaTop>
      <CbaLower>
        <CbaSide>
          <Bars count={28} seed={2} vertical />
          <CbaVertical>010 1 0101/P / 2 2235683 / 0000 SL/010/0/1 /2015 0 / V06</CbaVertical>
        </CbaSide>
        <CbaMain>
          <SmartTitle>Smart Access</SmartTitle>
          <YellowRule $top={2} />
          <CbaPara $top={1.7}>
            <div>Enjoy the convenience and security of withdrawing what you need, when you need it. Plus you can have your</div>
            <div>monthly account fee waived if you deposit at least $2,000 each calendar month.</div>
          </CbaPara>
          <NoteRow $top={3}><span>Name:</span><span>CLIFFORD HENRY BENNISON</span></NoteRow>
          <NoteRow $top={3.5}>
            <span>Note:</span>
            <div>
              <div>Have you checked your statement today? It's easy to find out more information about each of your</div>
              <div>transactions by logging on to the CommBank App or NetBank. Should you have any questions on</div>
              <div>fees or see an error please contact us on the details above. Cheque proceeds are available when</div>
              <div>cleared.</div>
            </div>
          </NoteRow>
          <YellowRule $top={6.5} />
          <CbaHead><span>Date</span><span>Transaction</span><span className="num">Debit</span><span className="num">Credit</span><span className="num">Balance</span></CbaHead>
          {cbaRows.map((r, i) => (
            <CbaTxRow key={i} $h={r[6]} $partial={r[7]} $single={!r[2]}>
              <span>{r[0]}</span>
              <span>{r[1]}{r[2] && <><br />{r[2]}</>}</span>
              <span className="num">{r[3]}</span>
              <span className="num">{r[4]}</span>
              <span className="num">{r[5]}</span>
            </CbaTxRow>
          ))}
        </CbaMain>
      </CbaLower>
    </CbaSheet>
  );
}

const documents = [
  { page: IdfcPage, title: "IDFC FIRST Bank Limited - Mr. Chandrakant Yuvraj Bansode", txns: 22, pages: 1 },
  { page: LloydsPage, title: "Lloyds Bank - Oleh Beshleu", txns: 42, pages: 2 },
  { page: UsbPage, title: "U.S. Bank National Association - BETHLEHEM HOME HEALTH CARE AGENCY", txns: 91, pages: 10 },
  { page: CbaPage, title: "Commonwealth Bank of Australia - CLIFFORD HENRY BENNISON", txns: 40, pages: 3 },
  { page: IdfcPage, title: "IDFC FIRST Bank - Mr. Chandrakant Yuvraj Bansode", txns: 204, pages: 9 },
];

function DocumentCard({ doc }) {
  const PageContent = doc.page;
  return (
    <Card>
      <CheckBadge><CheckIcon /></CheckBadge>
      <Viewer>
        <ViewerBar>
          <ViewerButton><DownloadIcon /></ViewerButton>
          <ViewerButton><PrintIcon /></ViewerButton>
          <ViewerButton><MoreIcon /></ViewerButton>
        </ViewerBar>
        <PageWell><PageContent /></PageWell>
      </Viewer>
      <CardBody>
        <CardTitle>{doc.title}</CardTitle>
        <MetaRow>
          <span>{doc.txns} txns</span>
          <span>{doc.pages} pages</span>
          <span>9/9/2025</span>
        </MetaRow>
        <CardFooter>
          <ReadyChip>Ready</ReadyChip>
          <DeselectHint>Click to deselect</DeselectHint>
          <DetailsLink>Details</DetailsLink>
        </CardFooter>
      </CardBody>
    </Card>
  );
}

export default function App() {
  return (
    <>
      <GlobalStyle />
      <Shell>
        <Sidebar>
          <NavItem $active>
            <svg viewBox="0 0 24 24"><path d="M14 2H6c-1.100 0-1.990.9-1.990 2L4 20c0 1.100.89 2 1.990 2H18c1.100 0 2-.9 2-2V8l-6-6zm2 16H8v-2h8v2zm0-4H8v-2h8v2zm-3-5V3.500L18.500 9H13z" /></svg>
            <NavLabel>Documents</NavLabel>
          </NavItem>
          <NavItem>
            <svg viewBox="0 0 24 24"><path d="M10 10.020h5V21h-5zM17 21h3c1.100 0 2-.9 2-2v-9h-5v11zm3-18H5c-1.100 0-2 .9-2 2v3h19V5c0-1.100-.9-2-2-2zM3 19c0 1.100.9 2 2 2h3V10H3v9z" /></svg>
            <NavLabel>Transactions</NavLabel>
          </NavItem>
          <NavItem>
            <svg viewBox="0 0 24 24"><path d="M19 3H5c-1.100 0-2 .9-2 2v14c0 1.100.9 2 2 2h14c1.100 0 2-.9 2-2V5c0-1.100-.9-2-2-2zM9 17H7v-7h2v7zm4 0h-2V7h2v10zm4 0h-2v-4h2v4z" /></svg>
            <NavLabel>Risk Engine</NavLabel>
          </NavItem>
        </Sidebar>
        <Main>
          <Header>
            <div>
              <PageTitle>Documents</PageTitle>
              <PageCount>5 documents</PageCount>
            </div>
            <UploadButton>
              <svg viewBox="0 0 24 24"><path d="M9 16h6v-6h4l-7-7-7 7h4zm-4 2h14v2H5z" /></svg>
              Upload Document
            </UploadButton>
          </Header>
          <SelectionBar>
            <SelectedChip>5 selected</SelectedChip>
            <BarLink>Select All</BarLink>
            <BarLink $muted>Clear</BarLink>
          </SelectionBar>
          <CardGrid>
            {documents.map((doc) => (
              <DocumentCard key={doc.title} doc={doc} />
            ))}
          </CardGrid>
        </Main>
      </Shell>
    </>
  );
}
